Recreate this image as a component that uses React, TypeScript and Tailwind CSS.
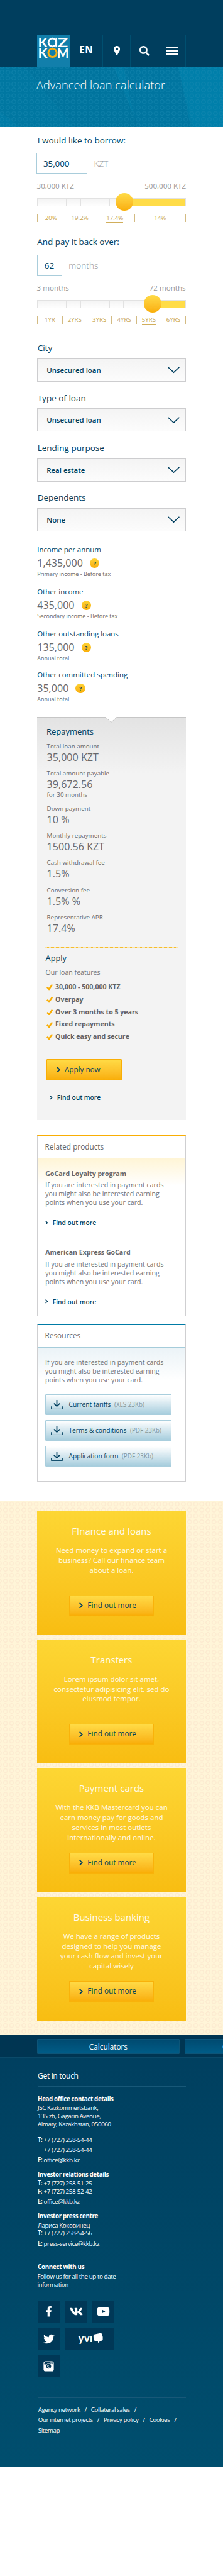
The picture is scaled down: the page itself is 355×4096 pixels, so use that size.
import React from "react";
import { FaFacebookF, FaSearch, FaTwitter, FaVk, FaYoutube } from "react-icons/fa";

function Logo() {
  return (
    <svg viewBox="0 0 66 64" className="block h-full w-full overflow-visible font-['Lato',sans-serif] font-bold" preserveAspectRatio="none">
      <g fill="#ffffff" fontSize="26.5">
        <text x="2" y="24" textLength="19" lengthAdjust="spacingAndGlyphs">K</text>
        <text x="41.5" y="24" textLength="21" lengthAdjust="spacingAndGlyphs">Z</text>
        <text x="2" y="45" textLength="19" lengthAdjust="spacingAndGlyphs">K</text>
        <text x="40.5" y="45" textLength="23.5" lengthAdjust="spacingAndGlyphs">M</text>
      </g>
      <circle cx="31" cy="14.6" r="8" fill="none" stroke="#ffffff" strokeWidth="3.5" />
      <rect x="37.2" y="5" width="3.5" height="19.2" fill="#ffffff" />
      <circle cx="31.2" cy="35.3" r="8.4" fill="none" stroke="#f9ae12" strokeWidth="3.7" />
    </svg>
  );
}

function PinIcon() {
  return (
    <svg viewBox="0 0 13 20" className="h-[15.6px] w-[10.2px]" fill="#ffffff" fillRule="evenodd">
      <path d="M6.5 0C10 0 13 2.8 13 6.4 13 10.5 9 14 6.9 20H6.1C4 14 0 10.5 0 6.4 0 2.8 3 0 6.5 0ZM6.5 3.7A2.7 2.7 0 1 0 6.5 9.1 2.7 2.7 0 1 0 6.5 3.7Z" />
    </svg>
  );
}

function Header() {
  return (
    <header className="h-[106.6px] bg-[#003e5e] pl-[59.2px] pt-[56px]">
      <div className="flex h-[50.6px] w-[236.6px]">
        <div className="h-full w-[52px] bg-[#127fab]"><Logo /></div>
        <div className="flex w-[53px] items-center justify-center border-r border-[#004f70] pb-[2.5px] text-[15.4px] font-bold tracking-[0.3px] text-white">EN</div>
        <div className="flex w-[44px] items-center justify-center border-r border-[#004f70] pb-[1.5px]"><PinIcon /></div>
        <div className="flex w-[44px] items-center justify-center border-r border-[#004f70] pb-[1px]"><FaSearch className="size-[15.8px] text-white" /></div>
        <div className="flex w-[43.6px] flex-col items-center justify-center gap-[2.8px] border-r border-[#004f70] pb-[2px]">
          <div className="h-[2.6px] w-[19.7px] bg-white" />
          <div className="h-[2.6px] w-[19.7px] bg-white" />
          <div className="h-[2.6px] w-[19.7px] bg-white" />
        </div>
      </div>
    </header>
  );
}

function Hero() {
  return (
    <div className="relative h-[95.6px] overflow-hidden bg-[#007ba6]">
      <svg viewBox="0 0 450 121" preserveAspectRatio="none" className="absolute inset-0 h-full w-full">
        <polygon points="50,0 230,0 280,121 150,121" fill="#006f99" opacity="0.6" />
        <polygon points="0,0 55,0 155,121 40,121 0,90" fill="#00749f" opacity="0.6" />
        <polygon points="250,0 360,0 390,121 275,121" fill="#006f99" opacity="0.5" />
        <polygon points="360,0 450,0 450,121 385,121" fill="#0086b2" opacity="0.4" />
      </svg>
      <div className="absolute inset-0 bg-[radial-gradient(circle,transparent_2.2px,#1b8bb3_2.9px,#1b8bb3_3.2px,transparent_4px)] bg-[length:9.45px_9.35px] bg-[position:-1.6px_3.3px] opacity-60" />
      <h1 className="relative pl-[58px] pt-[17px] text-[18.1px] leading-[23px] font-[350] tracking-[0.1px] text-white">Advanced loan calculator</h1>
    </div>
  );
}

function Track({ knob, cells }: { knob: number; cells: number }) {
  return (
    <div className="relative mt-[9.7px] flex h-[13.2px] w-[236.6px] border border-[#e2e2e2]">
      <div className="flex shrink-0 overflow-hidden bg-gradient-to-b from-[#f4f4f4] to-[#fdfdfd]" style={{ width: knob }}>
        {Array.from({ length: cells }, (_, i) => (
          <div key={i} className="w-[22.88px] shrink-0 border-r border-[#e2e2e2]" />
        ))}
      </div>
      <div className="flex-1 bg-[#ffdc48]" />
      <div
        className="absolute -top-[9px] size-[27.8px] rounded-full bg-gradient-to-b from-[#ffdb45] to-[#f9ae05]"
        style={{ left: knob - 14.9 }}
      />
    </div>
  );
}

function Tick({ label, width, active }: { label: string; width: number; active?: boolean }) {
  return (
    <div className="flex h-full items-center justify-center border-l border-[#d3bb83]" style={{ width }}>
      <span className={active ? "relative after:absolute after:inset-x-0 after:-bottom-[1.5px] after:h-[1.6px] after:bg-[#d1ae5b]" : ""}>{label}</span>
    </div>
  );
}

function Ticks({ items, className }: { items: { label: string; width: number; active?: boolean }[]; className: string }) {
  return (
    <div className={"flex w-[236.6px] border-r border-[#d3bb83] text-[9.7px] font-medium leading-[13px] text-[#c9a755] " + className}>
      {items.map((t) => (
        <Tick key={t.label} {...t} />
      ))}
    </div>
  );
}

const rates = [
  { label: "20%", width: 43.4 },
  { label: "19.2%", width: 48.1 },
  { label: "17.4%", width: 63.1, active: true },
  { label: "14%", width: 81 },
];

const terms = [
  { label: "1YR", width: 39.4 },
  { label: "2YRS", width: 39.4 },
  { label: "3YRS", width: 39.4 },
  { label: "4YRS", width: 39.4 },
  { label: "5YRS", width: 39.4, active: true },
  { label: "6YRS", width: 38.6 },
];

function SelectField({ label, value }: { label: string; value: string }) {
  return (
    <div className="pb-[15.4px]">
      <div className="h-[20px] pl-[0.5px] text-[13.5px] leading-[20px] text-[#003f5f]">{label}</div>
      <div className="mt-[6.8px] flex h-[37.1px] items-center justify-between border border-[#cdcdcf] bg-gradient-to-b from-[#f4f4f4] to-[#fcfcfc] pl-[14px] pr-[9px] text-[11.45px] font-semibold text-[#003f5f]">
        <span>{value}</span>
        <svg viewBox="0 0 24 13" className="h-[10.3px] w-[19px]" fill="none" stroke="#003f5f" strokeWidth="2">
          <path d="M0.7 0.9 12 11.5 23.3 0.9" />
        </svg>
      </div>
    </div>
  );
}

function IncomeItem({ label, value, note, className }: { label: string; value: string; note: string; className: string }) {
  return (
    <div className={className}>
      <div className="h-[19px] text-[11.45px] leading-[19px] font-medium text-[#003f5f]">{label}</div>
      <div className="flex h-[25px] items-center gap-[11px] text-[16.1px] leading-[25px] text-[#68686b]">
        <span>{value}</span>
        <span className="flex size-[15.5px] items-center justify-center rounded-full bg-gradient-to-b from-[#fdd233] to-[#f9ae05] text-[9.5px] leading-none font-bold text-[#1b4a53]">?</span>
      </div>
      <div className="h-[10.2px] text-[9px] leading-[10.2px] text-[#68686b]">{note}</div>
    </div>
  );
}

function Figure({ label, value, note, className }: { label: string; value: string; note?: string; className: string }) {
  return (
    <div className={"text-[#68686b] " + className}>
      <div className="h-[14px] text-[9.8px] leading-[14px]">{label}</div>
      <div className="h-[20px] text-[16.1px] leading-[20px]">{value}</div>
      {note && <div className="h-[13px] text-[9.8px] leading-[13px]">{note}</div>}
    </div>
  );
}

function Chevron({ className }: { className: string }) {
  return (
    <svg viewBox="0 0 8 13" className={className} fill="none" stroke="#003f5f" strokeWidth="2.4" preserveAspectRatio="none">
      <path d="M1 1 6.4 6.5 1 12" />
    </svg>
  );
}

function MoreLink({ className }: { className: string }) {
  return (
    <a className={"flex h-[16px] items-center text-[10.2px] leading-[16px] font-semibold text-[#003f5f] " + className}>
      <Chevron className="mr-[7px] h-[6.6px] w-[4.6px]" />
      Find out more
    </a>
  );
}

const features = ["30,000 - 500,000 KTZ", "Overpay", "Over 3 months to 5 years", "Fixed repayments", "Quick easy and secure"];

function Repayments() {
  return (
    <section className="relative mt-[22.6px] h-[641px] border-t border-[#c6c6c6] bg-[linear-gradient(#e3e3e3,#f3f3f3_90px)] pl-[15.4px] pt-[12.7px]">
      <svg viewBox="0 0 18 9" className="absolute left-[108.5px] -top-px h-[9px] w-[18px]">
        <path d="M0 0 9 8.5 18 0Z" fill="#ffffff" />
        <path d="M0 0.5 9 8.5 18 0.5" fill="none" stroke="#c6c6c6" />
      </svg>
      <h2 className="-ml-[0.7px] h-[20px] text-[13px] leading-[20px] text-[#003f5f]">Repayments</h2>
      <Figure className="mt-[7.1px]" label="Total loan amount" value="35,000 KZT" />
      <Figure className="mt-[8.6px]" label="Total amount payable" value="39,672.56" note="for 30 months" />
      <Figure className="mt-[9.1px]" label="Down payment" value="10 %" />
      <Figure className="mt-[8.7px]" label="Monthly repayments" value="1500.56 KZT" />
      <Figure className="mt-[9.4px]" label="Cash withdrawal fee" value="1.5%" />
      <Figure className="mt-[10.2px]" label="Conversion fee" value="1.5% %" />
      <Figure className="mt-[8.9px]" label="Representative APR" value="17.4%" />
      <div className="-ml-[3.6px] mt-[19.5px] h-px w-[212px] bg-[repeating-linear-gradient(90deg,#f6bd2c_0_1px,#f8e3ab_1px_2px)]" />
      <h2 className="-ml-[2px] mt-[6.6px] h-[20px] text-[12.8px] leading-[20px] text-[#003f5f]">Apply</h2>
      <p className="-ml-[2px] mt-[6px] h-[14px] text-[10.6px] leading-[14px] text-[#737376]">Our loan features</p>
      <ul className="mt-[6.8px]">
        {features.map((f) => (
          <li key={f} className="flex h-[19.74px] items-center text-[10.6px] font-bold text-[#626265]">
            <svg viewBox="0 0 13 12" className="mr-[3.6px] -ml-[0.5px] h-[9.5px] w-[10.3px]" fill="#f9ae05">
              <path d="M0 7 2.4 5 5 7.4 10.2 0 13 1.3 6 11.8 4.9 12Z" />
            </svg>
            {f}
          </li>
        ))}
      </ul>
      <button className="-ml-[0.4px] mt-[25.6px] flex h-[33.1px] w-[119.9px] items-center rounded-[1px] border border-[#f9ae05] bg-gradient-to-b from-[#ffdb45] to-[#f9ae05] pl-[15px] pb-[1px] text-[11.7px] text-[#003f5f]">
        <Chevron className="mr-[6.4px] h-[9.7px] w-[6.3px]" />
        Apply now
      </button>
      <MoreLink className="ml-[4.6px] mt-[19.7px]" />
    </section>
  );
}

function Blurb() {
  return (
    <p className="text-[10.6px] leading-[14.25px] tracking-[0.02px] whitespace-nowrap text-[#717174]">
      If you are interested in payment cards
      <br />
      you might also be interested earning
      <br />
      points when you use your card.
    </p>
  );
}

function RelatedProducts() {
  return (
    <section className="mt-[23.9px] h-[288.4px] border border-t-2 border-[#cfcfd1] border-t-[#f9ae05]">
      <h3 className="h-[34.9px] pl-[11.4px] text-[11.8px] leading-[33.4px] font-medium text-[#68686b]">Related products</h3>
      <div className="border-t border-[#fddc4e] bg-[linear-gradient(#fff5d6,#ffffff_43px)] pl-[12px] pt-[15.1px]">
        <h4 className="h-[16px] text-[10.6px] leading-[16px] font-bold text-[#68686b]">GoCard Loyalty program</h4>
        <div className="mt-[3.1px]"><Blurb /></div>
        <MoreLink className="mt-[16.5px]" />
        <div className="mt-[19px] h-px w-[199.6px] bg-[repeating-linear-gradient(90deg,#f9d75c_0_1px,#fdf3cd_1px_2px)]" />
        <h4 className="mt-[11.3px] h-[16px] text-[10.6px] leading-[16px] font-bold text-[#68686b]">American Express GoCard</h4>
        <div className="mt-[3.4px]"><Blurb /></div>
        <MoreLink className="mt-[16.3px]" />
      </div>
    </section>
  );
}

function Download({ name, meta }: { name: string; meta: string }) {
  return (
    <a className="flex h-[33.2px] w-[201.2px] items-center rounded-[1px] border border-[#a9cedd] bg-gradient-to-b from-white to-[#a6cddd] pl-[8.5px] text-[10.2px] font-medium text-[#003f5f]">
      <svg viewBox="0 0 24 19" className="mr-[9px] h-[15px] w-[19px]" fill="none" stroke="#003f5f">
        <path d="M0.5 13V18.3H23.5V13" strokeWidth="1.2" />
        <path d="M12 0V12.5M6 7 12 12.7 18 7" strokeWidth="2.2" />
      </svg>
      <span>{name}</span>
      <span className="ml-[5.5px] text-[9.9px] font-normal text-[#86999f]">{meta}</span>
    </a>
  );
}

function Resources() {
  return (
    <section className="mt-[11.7px] h-[251.8px] border border-t-2 border-[#cfcfd1] border-t-[#007ba6]">
      <h3 className="h-[34.9px] pl-[11.4px] text-[11.8px] leading-[33.4px] font-medium text-[#68686b]">Resources</h3>
      <div className="border-t border-[#a5ccda] bg-[linear-gradient(#ebf3f7,#ffffff_52px)] pl-[11.8px] pt-[16.2px]">
        <Blurb />
        <div className="mt-[15.4px] flex flex-col gap-[7.85px]">
          <Download name="Current tariffs" meta="(XLS 23Kb)" />
          <Download name="Terms & conditions" meta="(PDF 23Kb)" />
          <Download name="Application form" meta="(PDF 23Kb)" />
        </div>
      </div>
    </section>
  );
}

const promos = [
  { title: "FInance and loans", lines: ["Need money to expand or start a", "business? Call our finance team", "about a loan."] },
  { title: "Transfers", lines: ["Lorem ipsum dolor sit amet,", "consectetur adipisicing elit, sed do", "eiusmod tempor."] },
  { title: "Payment cards", lines: ["With the KKB Mastercard you can", "earn money pay for goods and", "services in most outlets", "internationally and online."] },
  { title: "Business banking", lines: ["We have a range of products", "designed to help you manage", "your cash flow and invest your", "capital wisely"] },
];

function Promos() {
  return (
    <section className="mt-[31px] h-[848.8px] bg-[#fff5d8] bg-[radial-gradient(circle,transparent_2px,#fcead0_2.7px,#fcead0_3.4px,transparent_4.1px)] bg-[length:9.78px_9.43px] bg-[position:3.8px_-0.2px] pl-[59.2px] pt-[15.8px]">
      <div className="flex w-[236.6px] flex-col gap-[7.83px]">
        {promos.map((p) => (
          <article key={p.title} className="flex h-[196.7px] flex-col items-center bg-gradient-to-b from-[#fdd633] to-[#f8bd11] pt-[18.8px] text-center text-[#fffbea]">
            <h3 className="h-[24px] text-[15px] leading-[24px]">{p.title}</h3>
            <div className="mt-[11.3px] h-[79.5px]">
              {p.lines.map((l) => (
                <p key={l} className="h-[15.75px] text-[11.5px] leading-[15.75px] whitespace-nowrap">{l}</p>
              ))}
            </div>
            <button className="flex h-[32.8px] w-[135.7px] items-center border border-[#f9b20a] bg-gradient-to-b from-[#ffdb45] to-[#f9ae05] pl-[15.3px] pb-[1px] text-[11.8px] font-medium text-[#0d4656]">
              <Chevron className="mr-[7.5px] h-[9.5px] w-[5.9px]" />
              Find out more
            </button>
          </article>
        ))}
      </div>
    </section>
  );
}

function Contact({ tag, value }: { tag?: string; value: string }) {
  return (
    <div className="flex">
      <span className="w-[9.5px] font-semibold">{tag}</span>
      <span>{value}</span>
    </div>
  );
}

function Slash() {
  return <span className="mx-[7px]">/</span>;
}

function Tile({ children, className = "w-[35.5px]" }: { children: React.ReactNode; className?: string }) {
  return <a className={"flex h-[35.5px] items-center justify-center bg-[#003857] text-white " + className}>{children}</a>;
}

function Footer() {
  return (
    <footer className="h-[686.1px] bg-gradient-to-b from-[#003f5f] to-[#004e6e] text-white">
      <nav className="flex h-[35.9px] gap-[8px] overflow-hidden border-b border-[#0b4a69] bg-[#003552] pl-[59.2px] pt-[5.5px] text-[11.8px] leading-[22px]">
        <a className="h-[24.2px] w-[226.4px] shrink-0 rounded-[1px] border border-[#0d5578] bg-gradient-to-b from-[#004a70] to-[#005c87] text-center">Calculators</a>
        <a className="h-[24.2px] w-[226.4px] shrink-0 rounded-[1px] border border-[#0d5578] bg-gradient-to-b from-[#004a70] to-[#005c87] pl-[59.5px]">Currency converter</a>
      </nav>
      <div className="ml-[60px] w-[236px] text-[9.8px] leading-[12.6px] tracking-[-0.42px]">
        <h3 className="mt-[20.1px] h-[18px] text-[12.1px] leading-[18px] tracking-[-0.35px]">Get in touch</h3>
        <div className="mt-[7.2px] h-px bg-[#185878]" />
        <h4 className="mt-[12.3px] h-[14px] leading-[14px] font-bold tracking-[-0.37px]">Head office contact details</h4>
        <p className="mt-[1.7px]">
          JSC Kazkommertsbank,
          <br />
          135 zh, Gagarin Avenue,
          <br />
          Almaty, Kazakhstan, 050060
        </p>
        <div className="mt-[10.9px] leading-[15.8px]">
          <Contact tag="T:" value="+7 (727) 258-54-44" />
          <Contact value="+7 (727) 258-54-44" />
          <Contact tag="E:" value="office@kkb.kz" />
        </div>
        <h4 className="mt-[8.1px] h-[14px] leading-[14px] font-bold tracking-[-0.37px]">Investor relations details</h4>
        <div className="mt-[1.7px]">
          <Contact tag="T:" value="+7 (727) 258-51-25" />
          <Contact tag="F:" value="+7 (727) 258-52-42" />
        </div>
        <div className="mt-[1.7px] leading-[15.8px]">
          <Contact tag="E:" value="office@kkb.kz" />
        </div>
        <h4 className="mt-[8px] h-[14px] leading-[14px] font-bold tracking-[-0.37px]">Investor press centre</h4>
        <div className="mt-[1.6px]">
          <div>Лариса Коковинец</div>
          <Contact tag="T:" value="+7 (727) 258-54-56" />
        </div>
        <div className="mt-[1.8px] leading-[15.8px]">
          <Contact tag="E:" value="press-service@kkb.kz" />
        </div>
        <h4 className="mt-[22.9px] h-[14px] leading-[14px] font-bold tracking-[-0.3px]">Connect with us</h4>
        <p className="mt-[1.9px] -ml-[0.5px]">
          Follow us for all the up to date
          <br />
          information
        </p>
        <div className="mt-[18.6px] flex w-[124px] flex-wrap gap-[7.9px]">
          <Tile><FaFacebookF className="h-[16.6px] w-[11px]" /></Tile>
          <Tile><FaVk className="size-[21px]" /></Tile>
          <Tile><FaYoutube className="size-[20.8px]" /></Tile>
          <Tile><FaTwitter className="size-[18px]" /></Tile>
          <Tile className="w-[78.9px]">
            <svg viewBox="0 0 100 45" className="h-full w-full font-['Lato',sans-serif] font-bold" fill="#ffffff">
              <text x="26.8" y="29.7" fontSize="25" textLength="29" lengthAdjust="spacingAndGlyphs">yvı</text>
              <path d="M58 16.5Q58 14.5 60 13.7L71.5 11.2Q74.5 10.7 75.5 13.5 77.5 19 76.8 24 76.5 25.8 74.5 26.3L71 27.2 67.8 31.3 66.8 27.2 61.5 26.8Q59 26.5 58.5 23.5Z" />
            </svg>
          </Tile>
          <Tile>
            <svg viewBox="0 0 22 22" className="size-[17px]">
              <rect x="0.5" y="0.5" width="21" height="21" rx="4" fill="#ffffff" />
              <path d="M2 7V5Q2 2.5 4.5 2.3H15V7Z" fill="#003857" />
              <path d="M16.5 2.7H18.5Q19.5 2.7 19.5 3.7V6H16.5Z" fill="#ffffff" stroke="#003857" strokeWidth="0.8" />
              <circle cx="11" cy="10.8" r="5.6" fill="#ffffff" />
              <circle cx="11" cy="10.8" r="4" fill="#ffffff" stroke="#003857" strokeWidth="2" />
              <path d="M11 8.5A2.3 2.3 0 1 1 8.7 10.8H11Z" fill="#003857" />
            </svg>
          </Tile>
        </div>
        <div className="mt-[31.4px] h-px bg-[#185878]" />
        <div className="mt-[11.1px] pl-[0.7px] leading-[16.6px] whitespace-nowrap">
          <div>Agency network<Slash />Collateral sales<Slash /></div>
          <div>Our internet projects<Slash />Privacy policy<Slash />Cookies<Slash /></div>
          <div>Sitemap</div>
        </div>
      </div>
    </footer>
  );
}

export default function App() {
  return (
    <div className="min-h-[4096px] w-[355px] overflow-hidden bg-white font-['Open_Sans','Noto_Sans',sans-serif]">
      <Header />
      <Hero />
      <main className="ml-[59.2px] w-[236.6px]">
        <h2 className="h-[32.1px] pl-[0.5px] pt-[10.1px] text-[13.5px] leading-[22px] text-[#003f5f]">I would like to borrow:</h2>
        <div className="-ml-[0.8px] mt-[8.9px] flex h-[33.2px] items-center text-[13.5px]">
          <div className="mr-[10.8px] flex h-full w-[80.4px] items-center border border-[#a9cddb] pl-[9.5px] tracking-[-0.1px] text-[#003f5f]">35,000</div>
          <span className="font-light text-[#8f9092]">KZT</span>
        </div>
        <div className="-ml-[0.6px] mt-[11px] flex h-[18px] w-[237.5px] justify-between text-[11.6px] leading-[18px] font-medium text-[#97989a]">
          <span>30,000 KTZ</span>
          <span>500,000 KTZ</span>
        </div>
        <Track knob={138.9} cells={7} />
        <Ticks className="mt-[12.8px] h-[11.5px]" items={rates} />
        <h2 className="mt-[20.5px] h-[22px] text-[13.5px] leading-[22px] text-[#003f5f]">And pay it back over:</h2>
        <div className="mt-[10px] flex h-[33.7px] items-center text-[13.5px]">
          <div className="mr-[10.6px] flex h-full w-[39.4px] items-center justify-center border border-[#a9cddb] pr-[1px] text-[#003f5f]">62</div>
          <span className="font-light tracking-[0.1px] text-[#8f9092]">months</span>
        </div>
        <div className="-ml-[0.6px] mt-[10.7px] flex h-[18px] w-[237px] justify-between text-[11.6px] leading-[18px] font-medium text-[#97989a]">
          <span>3 months</span>
          <span>72 months</span>
        </div>
        <Track knob={183.8} cells={8} />
        <Ticks className="mt-[12.6px] h-[11.9px]" items={terms} />
        <div className="mt-[28.5px]">
          <SelectField label="City" value="Unsecured loan" />
          <SelectField label="Type of loan" value="Unsecured loan" />
          <SelectField label="Lending purpose" value="Real estate" />
          <SelectField label="Dependents" value="None" />
        </div>
        <div className="mt-[3.6px]">
          <IncomeItem className="mb-[12.9px]" label="Income per annum" value="1,435,000" note="Primary income - Before tax" />
          <IncomeItem className="mb-[12.9px]" label="Other income" value="435,000" note="Secondary income - Before tax" />
          <IncomeItem className="mb-[10.6px]" label="Other outstanding loans" value="135,000" note="Annual total" />
          <IncomeItem className="" label="Other committed spending" value="35,000" note="Annual total" />
        </div>
        <Repayments />
        <RelatedProducts />
        <Resources />
      </main>
      <Promos />
      <Footer />
    </div>
  );
}
